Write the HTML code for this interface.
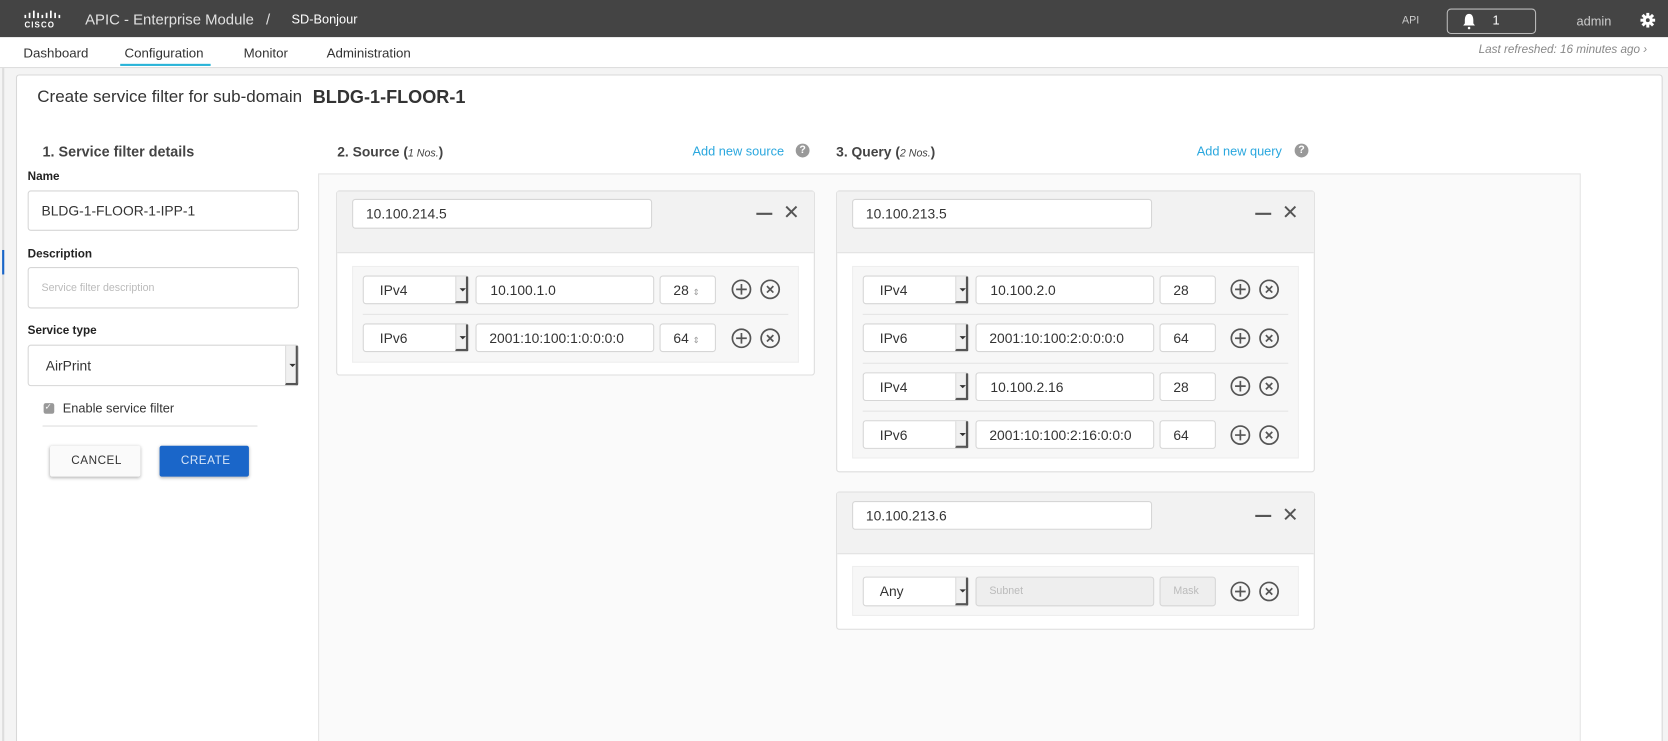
<!DOCTYPE html>
<html><head><meta charset="utf-8">
<style>
html,body{margin:0;padding:0;width:1668px;height:741px;overflow:hidden;background:#fff;}
#w{position:absolute;left:0;top:0;width:1568px;height:697px;overflow:hidden;transform:scale(1.06378);transform-origin:0 0;font-family:"Liberation Sans",sans-serif;color:#333;background:#f4f4f4;}
.a{position:absolute;}
.t{position:absolute;white-space:nowrap;line-height:1;}
.inp{position:absolute;background:#fff;border:1px solid #d6d6d6;border-radius:3px;box-sizing:border-box;font-size:13px;color:#333;}
.inp span{position:absolute;top:50%;transform:translateY(-50%);white-space:nowrap;}
.sel .arr{position:absolute;right:0;top:0;bottom:0;width:12px;background:#f0f0f0;border-left:1px solid #ddd;border-right:2px solid #555;border-bottom:2px solid #555;box-sizing:border-box;}
.sel .arr:after{content:"";position:absolute;left:3px;top:50%;margin-top:-1px;border-left:3px solid transparent;border-right:3px solid transparent;border-top:3px solid #333;}
.dis{background:#eee;color:#bbb;}
.ic{position:absolute;}
</style></head><body><div id="w">
<!-- top bar -->
<div class="a" style="left:0;top:0;width:1568px;height:35px;background:#444;"></div>
<svg class="ic" style="left:22px;top:9px" width="42" height="20" viewBox="0 0 42 20">
<g fill="#fff"><rect x="1" y="5" width="1.6" height="3"/><rect x="5" y="3" width="1.6" height="5"/><rect x="9" y="1" width="1.6" height="7"/><rect x="13" y="3" width="1.6" height="5"/><rect x="17" y="5" width="1.6" height="3"/><rect x="21" y="3" width="1.6" height="5"/><rect x="25" y="1" width="1.6" height="7"/><rect x="29" y="3" width="1.6" height="5"/><rect x="33" y="5" width="1.6" height="3"/></g>
<text x="1" y="17" font-size="7.5" font-weight="bold" fill="#fff" font-family="Liberation Sans" letter-spacing="1">CISCO</text></svg>
<div class="t" style="left:80px;top:11px;font-size:14px;color:#e0e0e0;">APIC - Enterprise Module</div>
<div class="t" style="left:250px;top:11px;font-size:14px;color:#e0e0e0;">/</div>
<div class="t" style="left:274px;top:12px;font-size:12px;color:#fff;">SD-Bonjour</div>
<div class="t" style="left:1318px;top:15px;font-size:10px;color:#ccc;">API</div>
<div class="a" style="left:1360px;top:8px;width:84px;height:24px;border:1px solid #bbb;border-radius:4px;box-sizing:border-box;"></div>
<svg class="ic" style="left:1374px;top:12px" width="14" height="16" viewBox="0 0 14 16"><path d="M7 1 C4 1 3 4 3 7 L3 10 L1.5 12 L12.5 12 L11 10 L11 7 C11 4 10 1 7 1Z" fill="#fff"/><circle cx="7" cy="14.3" r="1.2" fill="#fff"/></svg>
<div class="t" style="left:1403px;top:13px;font-size:12px;color:#fff;">1</div>
<div class="t" style="left:1482px;top:14px;font-size:12px;color:#ccc;">admin</div>
<svg class="ic" style="left:1542px;top:12px" width="14" height="14" viewBox="0 0 14 14"><g fill="#fff"><circle cx="7" cy="7" r="4.6"/><rect x="5.6" y="0" width="2.8" height="14"/><rect x="0" y="5.6" width="14" height="2.8"/><rect x="5.6" y="0" width="2.8" height="14" transform="rotate(45 7 7)"/><rect x="5.6" y="0" width="2.8" height="14" transform="rotate(-45 7 7)"/></g><circle cx="7" cy="7" r="1.8" fill="#444"/></svg>
<!-- nav -->
<div class="a" style="left:0;top:35px;width:1568px;height:28px;background:#fff;border-bottom:1px solid #ddd;"></div>
<div class="t" style="left:22px;top:44px;font-size:12.5px;color:#333;">Dashboard</div>
<div class="t" style="left:117px;top:44px;font-size:12.5px;color:#333;">Configuration</div>
<div class="a" style="left:113px;top:60px;width:85px;height:2px;background:#2ab4d8;"></div>
<div class="t" style="left:229px;top:44px;font-size:12.5px;color:#333;">Monitor</div>
<div class="t" style="left:307px;top:44px;font-size:12.5px;color:#333;">Administration</div>
<div class="t" style="left:1390px;top:42px;font-size:11px;color:#888;font-style:italic;">Last refreshed: 16 minutes ago ›</div>
<div class="a" style="left:2px;top:64px;width:2px;height:633px;background:#ddd;"></div>
<div class="a" style="left:2px;top:235px;width:2px;height:23px;background:#1a66c9;"></div>
<!-- card -->
<div class="a" style="left:15px;top:70px;width:1546px;height:640px;background:#fff;border:1px solid #d8d8d8;border-radius:3px;"></div>
<div class="t" style="left:35px;top:84px;font-size:16px;color:#333;">Create service filter for sub-domain</div>
<div class="t" style="left:294px;top:83px;font-size:17px;font-weight:bold;color:#333;">BLDG-1-FLOOR-1</div>
<div class="t" style="left:40px;top:136px;font-size:13.5px;font-weight:bold;color:#444;">1. Service filter details</div>
<div class="t" style="left:26px;top:161px;font-size:11px;font-weight:bold;color:#222;">Name</div>
<div class="inp" style="left:26px;top:179px;width:255px;height:38px;"><span style="left:12px;">BLDG-1-FLOOR-1-IPP-1</span></div>
<div class="t" style="left:26px;top:234px;font-size:11px;font-weight:bold;color:#222;">Description</div>
<div class="inp" style="left:26px;top:251px;width:255px;height:39px;"><span style="left:12px;font-size:10px;color:#bbb;">Service filter description</span></div>
<div class="t" style="left:26px;top:306px;font-size:11px;font-weight:bold;color:#222;">Service type</div>
<div class="inp sel" style="left:26px;top:324px;width:255px;height:39px;"><span style="left:16px;">AirPrint</span><div class="arr"></div></div>
<div class="a" style="left:41px;top:379px;width:10px;height:10px;background:#999;border-radius:2px;"></div>
<div class="t" style="left:42px;top:379px;font-size:8px;color:#fff;">✓</div>
<div class="t" style="left:59px;top:378px;font-size:12px;color:#333;">Enable service filter</div>
<div class="a" style="left:40px;top:400px;width:202px;height:1px;background:#ddd;"></div>
<div class="a" style="left:47px;top:419px;width:85px;height:29px;background:#fafafa;box-shadow:0 1px 3px rgba(0,0,0,.3);border-radius:2px;"></div>
<div class="t" style="left:67px;top:428px;font-size:11px;color:#333;letter-spacing:.5px;">CANCEL</div>
<div class="a" style="left:150px;top:419px;width:84px;height:29px;background:#1a66c9;box-shadow:0 1px 3px rgba(0,0,0,.3);border-radius:2px;"></div>
<div class="t" style="left:170px;top:428px;font-size:11px;color:#d8e6f8;letter-spacing:.5px;">CREATE</div>
<!-- source/query headers -->
<div class="t" style="left:317px;top:136px;font-size:13px;font-weight:bold;color:#444;">2. Source (<i style="font-size:10px;font-weight:normal">1 Nos.</i>)</div>
<div class="t" style="left:651px;top:136px;font-size:12px;color:#2aa7de;">Add new source</div>
<div class="a" style="left:748px;top:135px;width:13px;height:13px;border-radius:50%;background:#999;color:#fff;font-size:10px;font-weight:bold;text-align:center;line-height:13px;">?</div>
<div class="t" style="left:786px;top:136px;font-size:13px;font-weight:bold;color:#444;">3. Query (<i style="font-size:10px;font-weight:normal">2 Nos.</i>)</div>
<div class="t" style="left:1125px;top:136px;font-size:12px;color:#2aa7de;">Add new query</div>
<div class="a" style="left:1217px;top:135px;width:13px;height:13px;border-radius:50%;background:#999;color:#fff;font-size:10px;font-weight:bold;text-align:center;line-height:13px;">?</div>
<div class="a" style="left:299px;top:163px;width:1187px;height:540px;background:#fafafa;border:1px solid #e4e4e4;box-sizing:border-box;"></div>

<!-- Source panel -->
<div class="a" style="left:316px;top:179px;width:450px;height:174px;background:#fff;border:1px solid #ddd;border-radius:3px;box-sizing:border-box;"></div>
<div class="a" style="left:317px;top:180px;width:448px;height:57px;background:#f2f2f2;border-bottom:1px solid #e2e2e2;"></div>
<div class="inp" style="left:331px;top:187px;width:282px;height:28px;"><span style="left:12px;">10.100.214.5</span></div>
<div class="a" style="left:711px;top:200px;width:15px;height:2px;background:#555;"></div>
<div class="t" style="left:736px;top:191px;font-size:19px;color:#555;">✕</div>
<div class="a" style="left:331px;top:250px;width:420px;height:91px;background:#f7f7f7;border:1px solid #eee;box-sizing:border-box;"></div>
<div class="a" style="left:341px;top:295px;width:400px;height:1px;background:#e4e4e4;"></div>

<!-- Query panel 1 -->
<div class="a" style="left:786px;top:179px;width:450px;height:265px;background:#fff;border:1px solid #ddd;border-radius:3px;box-sizing:border-box;"></div>
<div class="a" style="left:787px;top:180px;width:448px;height:57px;background:#f2f2f2;border-bottom:1px solid #e2e2e2;"></div>
<div class="inp" style="left:801px;top:187px;width:282px;height:28px;"><span style="left:12px;">10.100.213.5</span></div>
<div class="a" style="left:1180px;top:200px;width:15px;height:2px;background:#555;"></div>
<div class="t" style="left:1205px;top:191px;font-size:19px;color:#555;">✕</div>
<div class="a" style="left:801px;top:250px;width:420px;height:181px;background:#f7f7f7;border:1px solid #eee;box-sizing:border-box;"></div>
<div class="a" style="left:811px;top:295px;width:400px;height:1px;background:#e4e4e4;"></div>
<div class="a" style="left:811px;top:341px;width:400px;height:1px;background:#e4e4e4;"></div>
<div class="a" style="left:811px;top:386px;width:400px;height:1px;background:#e4e4e4;"></div>

<!-- Query panel 2 -->
<div class="a" style="left:786px;top:462px;width:450px;height:130px;background:#fff;border:1px solid #ddd;border-radius:3px;box-sizing:border-box;"></div>
<div class="a" style="left:787px;top:463px;width:448px;height:57px;background:#f2f2f2;border-bottom:1px solid #e2e2e2;"></div>
<div class="inp" style="left:801px;top:471px;width:282px;height:27px;"><span style="left:12px;">10.100.213.6</span></div>
<div class="a" style="left:1180px;top:484px;width:15px;height:2px;background:#555;"></div>
<div class="t" style="left:1205px;top:475px;font-size:19px;color:#555;">✕</div>
<div class="a" style="left:801px;top:532px;width:420px;height:47px;background:#f7f7f7;border:1px solid #eee;box-sizing:border-box;"></div>

<!-- rows: source -->
<div class="inp sel" style="left:341px;top:259px;width:100px;height:27px;"><span style="left:15px;">IPv4</span><div class="arr"></div></div>
<div class="inp" style="left:447px;top:259px;width:168px;height:27px;"><span style="left:13px;">10.100.1.0</span></div>
<div class="inp" style="left:620px;top:259px;width:53px;height:27px;"><span style="left:12px;">28 <small style="font-size:8px;color:#999">⇕</small></span></div>
<div class="inp sel" style="left:341px;top:304px;width:100px;height:27px;"><span style="left:15px;">IPv6</span><div class="arr"></div></div>
<div class="inp" style="left:447px;top:304px;width:168px;height:27px;"><span style="left:12px;">2001:10:100:1:0:0:0:0</span></div>
<div class="inp" style="left:620px;top:304px;width:53px;height:27px;"><span style="left:12px;">64 <small style="font-size:8px;color:#999">⇕</small></span></div>

<!-- rows: query 1 -->
<div class="inp sel" style="left:811px;top:259px;width:100px;height:27px;"><span style="left:15px;">IPv4</span><div class="arr"></div></div>
<div class="inp" style="left:917px;top:259px;width:168px;height:27px;"><span style="left:13px;">10.100.2.0</span></div>
<div class="inp" style="left:1090px;top:259px;width:53px;height:27px;"><span style="left:12px;">28</span></div>
<div class="inp sel" style="left:811px;top:304px;width:100px;height:27px;"><span style="left:15px;">IPv6</span><div class="arr"></div></div>
<div class="inp" style="left:917px;top:304px;width:168px;height:27px;"><span style="left:12px;">2001:10:100:2:0:0:0:0</span></div>
<div class="inp" style="left:1090px;top:304px;width:53px;height:27px;"><span style="left:12px;">64</span></div>
<div class="inp sel" style="left:811px;top:350px;width:100px;height:27px;"><span style="left:15px;">IPv4</span><div class="arr"></div></div>
<div class="inp" style="left:917px;top:350px;width:168px;height:27px;"><span style="left:13px;">10.100.2.16</span></div>
<div class="inp" style="left:1090px;top:350px;width:53px;height:27px;"><span style="left:12px;">28</span></div>
<div class="inp sel" style="left:811px;top:395px;width:100px;height:27px;"><span style="left:15px;">IPv6</span><div class="arr"></div></div>
<div class="inp" style="left:917px;top:395px;width:168px;height:27px;"><span style="left:12px;">2001:10:100:2:16:0:0:0</span></div>
<div class="inp" style="left:1090px;top:395px;width:53px;height:27px;"><span style="left:12px;">64</span></div>

<!-- row: query 2 -->
<div class="inp sel" style="left:811px;top:542px;width:100px;height:28px;"><span style="left:15px;">Any</span><div class="arr"></div></div>
<div class="inp dis" style="left:917px;top:542px;width:168px;height:28px;"><span style="left:12px;font-size:10px;">Subnet</span></div>
<div class="inp dis" style="left:1090px;top:542px;width:53px;height:28px;"><span style="left:12px;font-size:10px;">Mask</span></div>

<!-- plus / x icons -->
<svg class="a" style="left:0;top:0" width="1568" height="697" viewBox="0 0 1568 697">
<defs>
<g id="p"><circle cx="0" cy="0" r="8.5" fill="none" stroke="#555" stroke-width="1.6"/><path d="M-5 0H5M0 -5V5" stroke="#555" stroke-width="1.6"/></g>
<g id="x"><circle cx="0" cy="0" r="8.5" fill="none" stroke="#555" stroke-width="1.6"/><path d="M-3 -3L3 3M3 -3L-3 3" stroke="#555" stroke-width="1.6"/></g>
</defs>
<use href="#p" x="697" y="272"/><use href="#x" x="724" y="272"/>
<use href="#p" x="697" y="318"/><use href="#x" x="724" y="318"/>
<use href="#p" x="1166" y="272"/><use href="#x" x="1193" y="272"/>
<use href="#p" x="1166" y="318"/><use href="#x" x="1193" y="318"/>
<use href="#p" x="1166" y="363"/><use href="#x" x="1193" y="363"/>
<use href="#p" x="1166" y="409"/><use href="#x" x="1193" y="409"/>
<use href="#p" x="1166" y="556"/><use href="#x" x="1193" y="556"/>
</svg>
</div></body></html>
